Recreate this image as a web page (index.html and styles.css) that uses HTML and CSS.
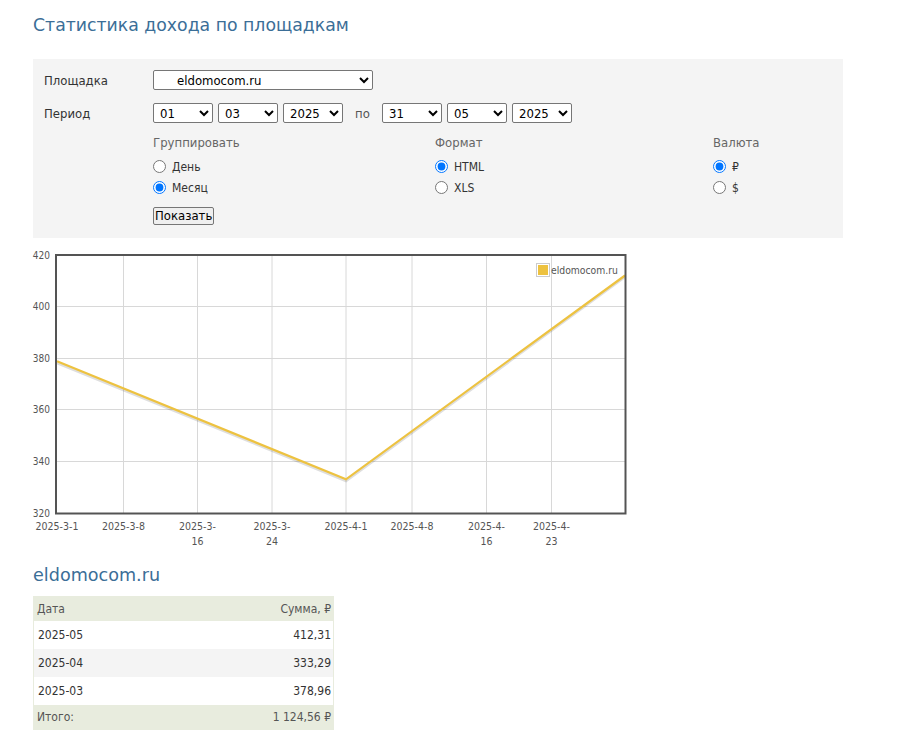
FILE: index.html
```html
<!DOCTYPE html>
<html lang="ru">
<head>
<meta charset="utf-8">
<title>Статистика дохода по площадкам</title>
<link rel="stylesheet" href="styles.css">
</head>
<body>
<div class="page">
  <h1 class="title">Статистика дохода по площадкам</h1>

  <form class="filter">
    <div class="frow frow-site">
      <span class="flabel">Площадка</span>
      <select class="sel sel-site"><option>eldomocom.ru</option></select>
    </div>
    <div class="frow frow-period">
      <span class="flabel">Период</span>
      <div class="dates">
        <select class="sel sel-date"><option>01</option></select>
        <select class="sel sel-date"><option>03</option></select>
        <select class="sel sel-date"><option>2025</option></select>
        <span class="po">по</span>
        <select class="sel sel-date"><option>31</option></select>
        <select class="sel sel-date"><option>05</option></select>
        <select class="sel sel-date"><option>2025</option></select>
      </div>
    </div>
    <div class="options">
      <div class="group">
        <div class="ghead">Группировать</div>
        <label class="radio"><input type="radio" name="group"> День</label>
        <label class="radio"><input type="radio" name="group" checked> Месяц</label>
      </div>
      <div class="group">
        <div class="ghead">Формат</div>
        <label class="radio"><input type="radio" name="format" checked> HTML</label>
        <label class="radio"><input type="radio" name="format"> XLS</label>
      </div>
      <div class="group">
        <div class="ghead">Валюта</div>
        <label class="radio"><input type="radio" name="cur" checked> ₽</label>
        <label class="radio"><input type="radio" name="cur"> $</label>
      </div>
    </div>
    <div class="actions"><button type="button" class="btn">Показать</button></div>
  </form>

  <svg class="chart" width="620" height="305" viewBox="20 245 620 305" xmlns="http://www.w3.org/2000/svg">
    <rect x="56" y="255" width="569.5" height="258.5" fill="#fff"/>
    <g stroke="#d8d8d8" stroke-width="1">
      <line x1="57" y1="306.5" x2="625" y2="306.5"/>
      <line x1="57" y1="358.5" x2="625" y2="358.5"/>
      <line x1="57" y1="409.5" x2="625" y2="409.5"/>
      <line x1="57" y1="461.5" x2="625" y2="461.5"/>
      <line x1="123.5" y1="256" x2="123.5" y2="513"/>
      <line x1="197.5" y1="256" x2="197.5" y2="513"/>
      <line x1="272" y1="256" x2="272" y2="513"/>
      <line x1="346" y1="256" x2="346" y2="513"/>
      <line x1="412" y1="256" x2="412" y2="513"/>
      <line x1="486.5" y1="256" x2="486.5" y2="513"/>
      <line x1="551.5" y1="256" x2="551.5" y2="513"/>
    </g>
    <polyline points="57,363 346,481 625,277" fill="none" stroke="rgba(0,0,0,0.13)" stroke-width="2.5"/>
    <polyline points="57,361.3 346,479.3 625,275.5" fill="none" stroke="#edc240" stroke-width="2.2" stroke-linejoin="miter"/>
    <rect x="56" y="255" width="569.5" height="258.5" fill="none" stroke="#545454" stroke-width="2"/>
    <rect x="536.5" y="263.5" width="13" height="13" fill="#fff" stroke="#ccc" stroke-width="1"/>
    <rect x="538" y="265" width="10" height="10" fill="#edc240"/>
    <text class="legend" x="551" y="274">eldomocom.ru</text>
    <g class="ylab" text-anchor="end">
      <text x="50" y="259">420</text>
      <text x="50" y="310">400</text>
      <text x="50" y="362">380</text>
      <text x="50" y="413">360</text>
      <text x="50" y="465">340</text>
      <text x="50" y="517">320</text>
    </g>
    <g class="xlab" text-anchor="middle">
      <text x="57" y="530">2025-3-1</text>
      <text x="123.5" y="530">2025-3-8</text>
      <text x="197.5" y="530">2025-3-<tspan x="197.5" y="545">16</tspan></text>
      <text x="272" y="530">2025-3-<tspan x="272" y="545">24</tspan></text>
      <text x="346" y="530">2025-4-1</text>
      <text x="412" y="530">2025-4-8</text>
      <text x="486.5" y="530">2025-4-<tspan x="486.5" y="545">16</tspan></text>
      <text x="551.5" y="530">2025-4-<tspan x="551.5" y="545">23</tspan></text>
    </g>
  </svg>

  <h2 class="subtitle">eldomocom.ru</h2>
  <table class="stats">
    <thead>
      <tr><th class="c-date">Дата</th><th class="c-sum">Сумма, ₽</th></tr>
    </thead>
    <tbody>
      <tr><td class="c-date">2025-05</td><td class="c-sum">412,31</td></tr>
      <tr class="alt"><td class="c-date">2025-04</td><td class="c-sum">333,29</td></tr>
      <tr><td class="c-date">2025-03</td><td class="c-sum">378,96</td></tr>
    </tbody>
    <tfoot>
      <tr><td class="c-date">Итого:</td><td class="c-sum">1 124,56 ₽</td></tr>
    </tfoot>
  </table>
</div>
</body>
</html>
```
FILE: styles.css
```css
html, body {
  margin: 0;
  padding: 0;
  background: #fff;
}
body {
  font-family: "DejaVu Sans Condensed", "DejaVu Sans", sans-serif;
  font-stretch: condensed;
  font-size: 13px;
  color: #333;
}
.page {
  padding: 0 33px;
}
.title {
  margin: 0;
  padding-top: 14px;
  font-family: "DejaVu Sans", sans-serif;
  font-stretch: normal;
  font-size: 17.3px;
  line-height: 22px;
  font-weight: normal;
  color: #3b6e97;
}
.filter {
  margin: 23px 0 0;
  width: 788px;
  background: #f4f4f4;
  padding: 11px 11px 13px;
}
.frow {
  display: flex;
  align-items: center;
  height: 20px;
}
.frow-period {
  margin-top: 13px;
}
.flabel {
  width: 109px;
  flex: none;
  color: #333;
}
.sel {
  height: 20px;
  font-family: inherit;
  font-stretch: condensed;
  font-size: 13px;
  color: #000;
  background: #fff;
  border: 1px solid #767676;
  border-radius: 2px;
  padding: 0 0 0 2px;
  margin: 0;
}
.sel-site {
  width: 220px;
  padding-left: 19px;
}
.dates {
  display: flex;
  align-items: center;
  gap: 5px;
}
.sel-date {
  width: 60px;
}
.po {
  width: 29px;
  text-align: center;
  color: #555;
}
.options {
  display: grid;
  grid-template-columns: 282px 278px auto;
  margin: 12px 0 0 109px;
}
.group {
  display: flex;
  flex-direction: column;
}
.ghead {
  line-height: 16px;
  color: #666;
  margin-bottom: 5px;
}
.radio {
  display: flex;
  align-items: center;
  height: 21px;
  color: #333;
  font-size: 12px;
}
.radio input {
  width: 13px;
  height: 13px;
  margin: 0 6px 0 0;
}
.actions {
  margin: 9px 0 0 109px;
}
.btn {
  font-family: inherit;
  font-stretch: condensed;
  font-size: 13px;
  color: #000;
  height: 18px;
  padding: 0 1px;
  line-height: 14px;
  background: #efefef;
  border: 1px solid #767676;
  border-radius: 2px;
}
.chart {
  display: block;
  margin: 7px 0 0 -13px;
}
.chart text {
  font-family: "DejaVu Sans Condensed", "DejaVu Sans", sans-serif;
  font-stretch: condensed;
  font-size: 10.5px;
  fill: #545454;
}
.chart .ylab text {
  font-size: 10px;
}
.chart .legend {
  font-size: 10.3px;
}
.subtitle {
  margin: 14px 0 0;
  font-family: "DejaVu Sans", sans-serif;
  font-stretch: normal;
  font-size: 17.6px;
  line-height: 22px;
  font-weight: normal;
  color: #3b6e97;
}
.stats {
  margin-top: 10px;
  width: 301px;
  border-collapse: collapse;
  border: 1px solid #e8ecde;
  font-size: 12px;
}
.stats th, .stats td {
  padding: 0 2px 0 3px;
}
.stats thead th {
  background: #e8ecde;
  font-weight: normal;
  font-size: 12px;
  color: #555;
  height: 24px;
}
.stats tbody td {
  height: 28px;
  background: #fff;
  color: #333;
}
.stats tbody td.c-date {
  padding-left: 4px;
}
.stats tbody tr.alt td {
  background: #f4f4f4;
}
.stats tfoot td {
  background: #e8ecde;
  font-size: 12px;
  color: #555;
  height: 24px;
}
.c-date {
  text-align: left;
}
.c-sum {
  text-align: right;
}
```
